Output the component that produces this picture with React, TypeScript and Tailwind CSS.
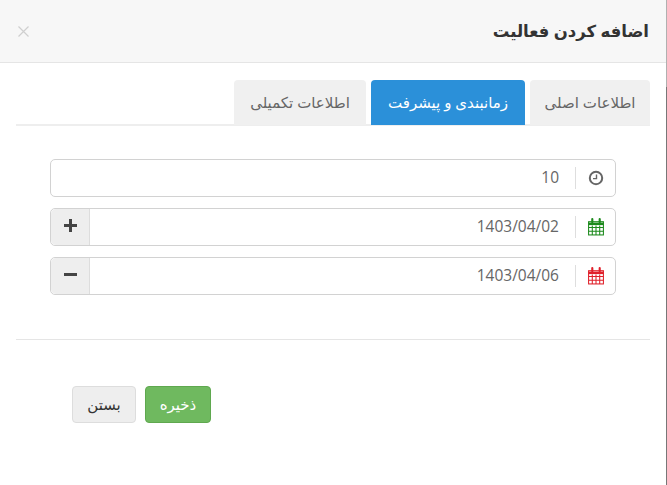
import { ReactNode } from 'react';

function ClockIcon() {
  return (
    <svg width="16" height="16" viewBox="0 0 16 16" fill="none" stroke="#666666">
      <circle cx="8" cy="8" r="6.2" strokeWidth="2" />
      <path d="M8.5 4.5V8.6H5" strokeWidth="1.4" />
    </svg>
  );
}

function CalendarIcon({ color }: { color: string }) {
  return (
    <svg width="18" height="18" viewBox="0 0 17 17" fill="none" stroke={color} strokeWidth="1">
      <rect x="1.5" y="3.5" width="14" height="12.5" />
      <path d="M1.5 5.5H15.5" strokeWidth="2.4" />
      <path d="M1.5 9H15.5M1.5 12.5H15.5M5 7V16M8.5 7V16M12 7V16" />
      <path d="M5 1V4M12 1V4" strokeWidth="2" strokeLinecap="round" />
    </svg>
  );
}

function DateField({ value, icon, button }: { value: string; icon: ReactNode; button?: string }) {
  return (
    <div className="flex h-[38px] rounded-[5px] border border-[#d2d2d2] bg-white">
      <div className="flex w-[39px] shrink-0 items-center justify-center">{icon}</div>
      <div className="my-[7px] w-px bg-[#dedede]" />
      <div className="flex flex-1 items-center pr-[16px] text-[15.5px] text-[#666666]">{value}</div>
      {button && (
        <button className="flex w-[39px] shrink-0 items-center justify-center rounded-l-[5px] border-r border-[#dddddd] bg-[#eeeeee] pb-[3px]">
          <svg width="13" height="13" viewBox="0 0 13 13" fill="none" stroke="#444444" strokeWidth="3">
            {button === '+' && <path d="M6.5 0V13" />}
            <path d="M0 6.5H13" />
          </svg>
        </button>
      )}
    </div>
  );
}

export default function App() {
  return (
    <div dir="rtl" className="relative h-[485px] w-[667px] overflow-hidden bg-white font-['Open_Sans','DejaVu_Sans',sans-serif] text-[#333333]">
      {/* Header */}
      <div className="flex h-[63px] items-center justify-between border-b border-[#e5e5e5] bg-[#f7f7f7] pl-[18px] pr-[18px]">
        <h4 className="text-[16.5px] font-bold text-[#333333]">اضافه کردن فعالیت</h4>
        <svg width="11" height="11" viewBox="0 0 11 11" fill="none" stroke="#cfcfcf" strokeWidth="1.2">
          <path d="M0.5 0.5L10.5 10.5M10.5 0.5L0.5 10.5" />
        </svg>
      </div>

      {/* Tabs */}
      <div className="ml-[16px] mr-[17px] mt-[17px] flex h-[46px] gap-[5px] border-b-2 border-[#eeeeee] text-[15px]">
        <div className="flex h-[45px] w-[120px] items-center justify-center rounded-t-[4px] bg-[#f0f0f0] text-[#666666]">اطلاعات اصلی</div>
        <div className="flex h-[45px] w-[154px] items-center justify-center rounded-t-[4px] bg-[#2b90d9] text-white">زمانبندی و پیشرفت</div>
        <div className="flex h-[45px] w-[132px] items-center justify-center rounded-t-[4px] bg-[#f0f0f0] text-[#666666]">اطلاعات تکمیلی</div>
      </div>

      {/* Fields */}
      <div className="ml-[50px] mr-[51px] mt-[33px] flex flex-col gap-[11px]">
        <DateField value="10" icon={<ClockIcon />} />
        <DateField value="1403/04/02" icon={<CalendarIcon color="#1c8a1c" />} button="+" />
        <DateField value="1403/04/06" icon={<CalendarIcon color="#e0202a" />} button="-" />
      </div>

      <div className="ml-[16px] mr-[17px] mt-[44px] border-t border-[#e5e5e5]" />

      {/* Footer */}
      <div className="mt-[46px] flex justify-end gap-[9px] pl-[72px] text-[15px]">
        <button className="h-[37px] w-[66px] rounded-[4px] border border-[#5fa84f] bg-[#6fb95f] text-white">ذخیره</button>
        <button className="h-[37px] w-[64px] rounded-[4px] border border-[#dddddd] bg-[#eeeeee] text-[#333333]">بستن</button>
      </div>

      {/* edge of the window behind the dialog */}
      <div className="absolute right-0 top-0 h-full w-px bg-linear-to-b from-[#b0b0b0] from-[18%] to-[#777777] to-[18%]" />
    </div>
  );
}
